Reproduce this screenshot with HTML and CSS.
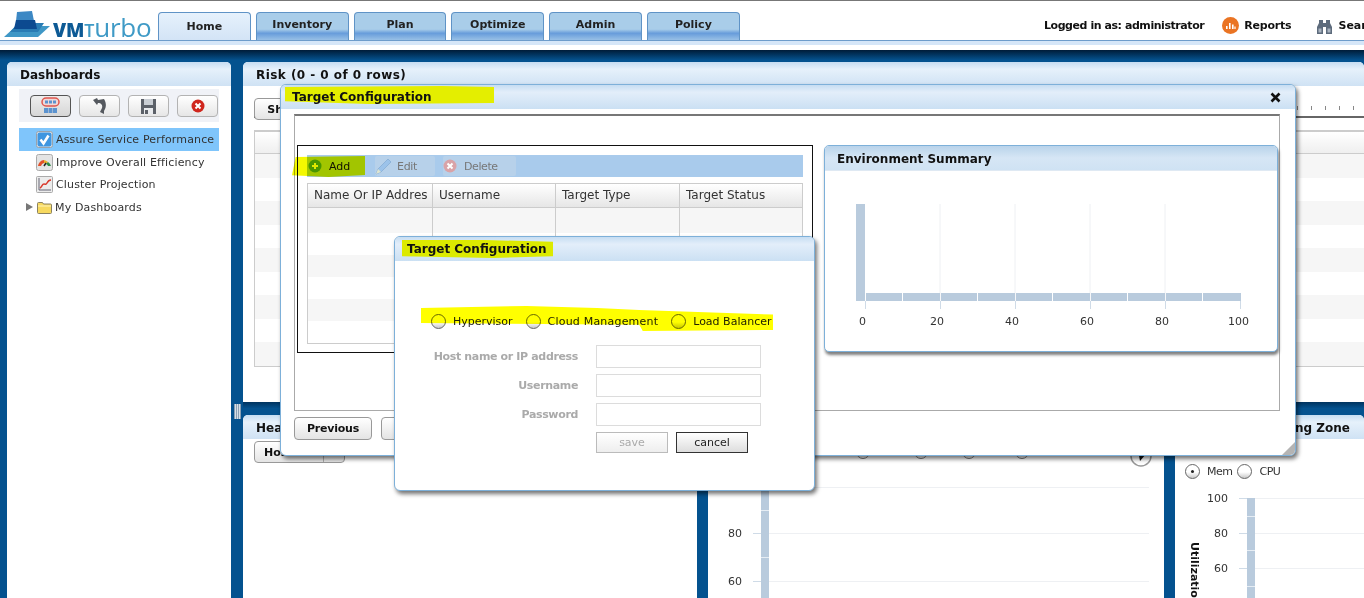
FILE: index.html
```html
<!DOCTYPE html>
<html lang="en">
<head>
<meta charset="utf-8">
<title>VMTurbo - Target Configuration</title>
<link rel="stylesheet" href="styles.css">
</head>
<body>
<div class="app">
  <header class="topbar">
    <div class="logo">
      <svg class="logo-mark" width="50" height="30" viewBox="0 0 50 30">
        <polygon points="2,27 14,16 48,16 36,27" fill="#3f97c6"/>
        <polygon points="8,22 16,13 42,13 36,22" fill="#2a7cb4"/>
        <polygon points="15,2 30,1 32,11 14,11" fill="#3c88c4"/>
        <polygon points="14,10 33,10 35,19 12,19" fill="#0c4a90"/>
      </svg>
      <span class="logo-text"><span class="logo-vm">VM</span><span class="logo-t">T</span>urbo</span>
    </div>
    <nav class="tabs">
      <div class="tab tab-active">Home</div>
      <div class="tab">Inventory</div>
      <div class="tab">Plan</div>
      <div class="tab">Optimize</div>
      <div class="tab">Admin</div>
      <div class="tab">Policy</div>
    </nav>
    <div class="userbar">
      <span class="user">Logged in as: administrator</span>
      <span class="userlink reports">
        <svg width="17" height="17" viewBox="0 0 17 17"><circle cx="8.5" cy="8.5" r="8.5" fill="#ea7423"/><path d="M4 12V9h1.6v3zM7 12V6h1.6v6zM10 12V7.5h1.6V12zM12.4 12V9.5H13.6V12z" fill="#fff"/></svg>
        Reports
      </span>
      <span class="userlink search">
        <svg width="15" height="16" viewBox="0 0 15 16"><path d="M2 2h4v3h3V2h4v3l2 4v7H9V9H6v7H0V9l2-4z" fill="#5d6b7c"/><path d="M1.500 10.500h3v4h-3zM10.500 10.500h3v4h-3z" fill="#aab4c0"/></svg>
        Search
      </span>
    </div>
  </header>
  <div class="band"></div>
  <div class="darkbar"></div>
  <main class="workspace">
    <aside class="panel side">
      <h2 class="panel-title">Dashboards</h2>
      <div class="side-tools">
        <button class="tool tool-on">
          <svg width="19" height="18" viewBox="0 0 19 18"><rect x="1" y="1" width="17" height="8" rx="4" fill="#f0d8d8" stroke="#e0564e" stroke-width="1.500"/><path d="M4 3.500h3v3H4zM8 3.500h3v3H8zM12 3.500h3v3h-3zM3 11h4v5H3zM7.500 11h4v5h-4zM12 11h4v5h-4z" fill="#5c93cf"/></svg>
        </button>
        <button class="tool">
          <svg width="16" height="18" viewBox="0 0 16 18"><path d="M1 3L5 1L6 3L12 2C15 7 14 11 12 14L12 17L8 15L10 11C11 8 9 6 6 6L5 8z" fill="#55595f"/></svg>
        </button>
        <button class="tool">
          <svg width="17" height="17" viewBox="0 0 17 17"><path d="M1 1h15v15H1z" fill="#5c6169"/><path d="M4 1h9v6H4z" fill="#c9ced4"/><path d="M4 10h9v6H4z" fill="#e9ebee"/><path d="M5 12h3v4H5z" fill="#5c6169"/></svg>
        </button>
        <button class="tool">
          <svg width="14" height="14" viewBox="0 0 14 14"><circle cx="7" cy="7" r="6.500" fill="#d0261d"/><path d="M4.500 4.500l5 5M9.500 4.500l-5 5" stroke="#fff" stroke-width="2"/></svg>
        </button>
      </div>
      <ul class="tree">
        <li class="tree-row tree-selected">
          <svg class="tree-icon" width="17" height="17" viewBox="0 0 17 17"><rect x=".5" y=".5" width="16" height="16" rx="2" fill="#dfe3e8" stroke="#9aa2ab"/><rect x="1.500" y="1.500" width="14" height="14" rx="2" fill="#3f96e0"/><path d="M4.500 8.500l3 4 5-8" fill="none" stroke="#fff" stroke-width="2.600"/></svg>
          Assure Service Performance
        </li>
        <li class="tree-row">
          <svg class="tree-icon" width="17" height="17" viewBox="0 0 17 17"><rect x=".5" y=".5" width="16" height="16" rx="2" fill="#e4e4e4" stroke="#aaa"/><path d="M2 12a6.500 6.500 0 0 1 6-6v3a4 4 0 0 0-3 3z" fill="#e2512b"/><path d="M8 6a6.500 6.500 0 0 1 4 2l-2 2a3 3 0 0 0-2-1z" fill="#eeb02e"/><path d="M12 8a6.500 6.500 0 0 1 3 4h-3a4 4 0 0 0-2-2z" fill="#2c8f45"/><path d="M8 12l2-3" stroke="#222" stroke-width="1.500"/></svg>
          Improve Overall Efficiency
        </li>
        <li class="tree-row">
          <svg class="tree-icon" width="17" height="17" viewBox="0 0 17 17"><rect x=".5" y=".5" width="16" height="16" rx="1" fill="#ececec" stroke="#aaa"/><path d="M3 2v12h12" fill="none" stroke="#667" stroke-width="1"/><path d="M4 12c2-1 2-4 4-4s2 1 3-1 2-3 4-3" fill="none" stroke="#d9392c" stroke-width="1.500"/></svg>
          Cluster Projection
        </li>
        <li class="tree-row tree-folder">
          <span class="tree-arrow"></span>
          <svg class="folder-icon" width="15" height="13" viewBox="0 0 15 13"><path d="M.5 2.500a1 1 0 0 1 1-1h4l1 1.500h7a1 1 0 0 1 1 1v7.500a1 1 0 0 1-1 1h-12a1 1 0 0 1-1-1z" fill="#f7d95f" stroke="#8a8262"/><path d="M1 5h13" stroke="#fff3b8"/></svg>
          My Dashboards
        </li>
      </ul>
    </aside>

    <div class="content">
      <section class="panel risk">
        <h2 class="panel-title title-risk">Risk (0 - 0 of 0 rows)</h2>
        <div class="risk-tools">
          <button class="soft-btn show-btn">Show</button>
          <div class="ruler"><i></i><i></i><i></i><i></i><i></i></div>
        </div>
        <div class="risk-table">
          <div class="risk-head"></div>
          <div class="risk-row"></div><div class="risk-row"></div><div class="risk-row"></div>
          <div class="risk-row"></div><div class="risk-row"></div><div class="risk-row"></div>
          <div class="risk-row"></div><div class="risk-row"></div><div class="risk-row"></div>
        </div>
      </section>
      <div class="splitter"><span class="grip"></span></div>
      <div class="lower">
        <section class="panel heat">
          <h2 class="panel-title">Health</h2>
          <button class="soft-btn host-btn">Host<span class="host-div"></span></button>
        </section>
        <section class="panel middle">
          <h2 class="panel-title">Usage</h2>
          <svg class="chart-mid" width="456" height="159" viewBox="709 439 456 159">
            <g fill="none" stroke="#777" stroke-width="1"><circle cx="864" cy="452" r="6.500"/><circle cx="922" cy="452" r="6.500"/><circle cx="970" cy="452" r="6.500"/><circle cx="1023" cy="452" r="6.500"/></g>
            <circle cx="1142" cy="456" r="10" fill="#fff" stroke="#999" stroke-width="1.500"/>
            <path d="M1139 450l8 4-6 7z" fill="#111"/>
            <g stroke="#eef0f3"><path d="M770 487.500H1150M770 533.500H1150M770 581.500H1150"/></g>
            <rect x="762" y="440" width="8" height="158" fill="#b9cbdd"/>
            <path d="M762 510.500h8M762 557.500h8" stroke="#e6edf4"/>
            <path d="M754 533.500h8M754 581.500h8" stroke="#cfdbe7"/>
            <text class="axis" x="729" y="537">80</text>
            <text class="axis" x="729" y="585">60</text>
          </svg>
        </section>
        <section class="panel right">
          <h2 class="panel-title title-end">Operating Zone</h2>
          <div class="mem-row">
            <span class="radio radio-on"></span><span class="mem-label">Mem</span>
            <span class="radio"></span><span class="mem-label">CPU</span>
          </div>
          <svg class="chart-right" width="189" height="118" viewBox="1175 480 189 118">
            <g stroke="#eef0f3"><path d="M1255 498.500H1364M1255 533.500H1364M1255 568.500H1364"/></g>
            <rect x="1247" y="498" width="8" height="100" fill="#b9cbdd"/>
            <path d="M1247 516.500h8M1247 550.500h8M1247 586.500h8" stroke="#e6edf4"/>
            <path d="M1239 498.500h8M1239 533.500h8M1239 568.500h8" stroke="#cfdbe7"/>
            <text class="axis" x="1207" y="502">100</text>
            <text class="axis" x="1214" y="537">80</text>
            <text class="axis" x="1214" y="572">60</text>
            <text class="axis-title" transform="translate(1191 542) rotate(90)">Utilization</text>
          </svg>
        </section>
      </div>
    </div>
  </main>
</div>

<div class="dialog dialog-main">
  <div class="dialog-title">
    <i class="mark mark-main"></i>
    <span class="dialog-text">Target Configuration</span>
    <svg width="11" height="11" viewBox="0 0 11 11"><path d="M1.500 1.500l8 8M9.500 1.500l-8 8" stroke="#111" stroke-width="2.600"/></svg>
  </div>
  <div class="dialog-body">
    <div class="inner">
      <div class="targets">
        <div class="toolbar">
          <span class="tb-btn tb-add">
            <svg width="14" height="14" viewBox="0 0 14 14"><circle cx="7" cy="7" r="6.500" fill="#4d9a1e"/><path d="M7 4v6M4 7h6" stroke="#e9ee70" stroke-width="2"/></svg>
            Add
          </span>
          <span class="tb-btn tb-edit">
            <svg width="18" height="18" viewBox="0 0 18 18"><path d="M1 17l2-5L13 2l3 3L6 15z" fill="#9cc3ea" stroke="#8eb4da"/><path d="M1 17l2-5 3 3z" fill="#dfe5d0"/></svg>
            Edit
          </span>
          <span class="tb-btn tb-delete">
            <svg width="14" height="14" viewBox="0 0 14 14"><circle cx="7" cy="7" r="6.500" fill="#d9a3a8"/><path d="M4.500 4.500l5 5M9.500 4.500l-5 5" stroke="#fff" stroke-width="2"/></svg>
            Delete
          </span>
        </div>
        <div class="grid">
          <div class="grid-row grid-head">
            <div class="cell">Name Or IP Addres</div>
            <div class="cell">Username</div>
            <div class="cell">Target Type</div>
            <div class="cell">Target Status</div>
          </div>
          <div class="grid-row grid-first"><div class="cell"></div><div class="cell"></div><div class="cell"></div><div class="cell"></div></div>
          <div class="grid-row"><div class="cell"></div><div class="cell"></div><div class="cell"></div><div class="cell"></div></div>
          <div class="grid-row"><div class="cell"></div><div class="cell"></div><div class="cell"></div><div class="cell"></div></div>
          <div class="grid-row"><div class="cell"></div><div class="cell"></div><div class="cell"></div><div class="cell"></div></div>
          <div class="grid-row"><div class="cell"></div><div class="cell"></div><div class="cell"></div><div class="cell"></div></div>
          <div class="grid-row"><div class="cell"></div><div class="cell"></div><div class="cell"></div><div class="cell"></div></div>
        </div>
      </div>
      <section class="env">
        <h3 class="env-title">Environment Summary</h3>
        <svg class="env-chart" width="452" height="180" viewBox="825 171 452 180">
          <g stroke="#eef0f3"><path d="M940 204V301M1015 204V301M1090 204V301M1165 204V301"/></g>
          <rect x="856" y="204" width="9" height="97" fill="#b9cbdd"/>
          <g fill="#b9cbdd">
            <rect x="866" y="293" width="36" height="8"/><rect x="903" y="293" width="37" height="8"/>
            <rect x="941" y="293" width="36" height="8"/><rect x="978" y="293" width="37" height="8"/>
            <rect x="1016" y="293" width="36" height="8"/><rect x="1053" y="293" width="37" height="8"/>
            <rect x="1091" y="293" width="36" height="8"/><rect x="1128" y="293" width="37" height="8"/>
            <rect x="1166" y="293" width="36" height="8"/><rect x="1203" y="293" width="38" height="8"/>
          </g>
          <g stroke="#cfdbe7"><path d="M865.500 301V309M940.500 301V309M1015.500 301V309M1090.500 301V309M1165.500 301V309M1240.500 301V309"/></g>
          <g class="axis">
            <text x="859" y="325">0</text><text x="930" y="325">20</text><text x="1005" y="325">40</text>
            <text x="1080" y="325">60</text><text x="1155" y="325">80</text><text x="1228" y="325">100</text>
          </g>
        </svg>
      </section>
    </div>
    <div class="wizard">
      <button class="soft-btn wiz-btn">Previous</button>
      <button class="soft-btn wiz-btn">Next</button>
    </div>
  </div>
  <span class="resize"></span>
</div>

<div class="dialog dialog-sub">
  <div class="dialog-title title-sub">
    <i class="mark mark-sub"></i>
    <span class="dialog-text">Target Configuration</span>
  </div>
  <div class="sub-body">
    <div class="radios">
      <span class="radio"></span><span class="radio-label label-a">Hypervisor</span>
      <span class="radio"></span><span class="radio-label label-b">Cloud Management</span>
      <span class="radio"></span><span class="radio-label">Load Balancer</span>
    </div>
    <div class="form">
      <label class="form-label">Host name or IP address</label><span class="input"></span>
      <label class="form-label">Username</label><span class="input"></span>
      <label class="form-label">Password</label><span class="input"></span>
    </div>
    <div class="form-actions">
      <button class="action action-off">save</button>
      <button class="action">cancel</button>
    </div>
  </div>
</div>

<div class="hl hl-add"></div>
<div class="hl hl-radios"></div>
</body>
</html>
```

FILE: styles.css
```css
* { box-sizing: border-box; }
html, body { margin: 0; height: 598px; overflow: hidden; background: #fff; }
body { position: relative; width: 1364px; font-family: "DejaVu Sans", Verdana, sans-serif; font-size: 11px; color: #111; }
h2, h3, ul { margin: 0; padding: 0; }
button { font-family: inherit; cursor: default; }

.app { display: flex; flex-direction: column; height: 598px; }

/* top bar */
.topbar { height: 41px; flex: none; display: flex; border-top: 1px solid #777; border-bottom: 1px solid #6d9ccb; background: #fff; }
.logo { width: 158px; flex: none; display: flex; align-items: flex-start; position: relative; padding: 9px 0 0 2px; }
.logo-mark { flex: none; }
.logo-text { font-family: "Open Sans", sans-serif; font-size: 26px; line-height: 30px; color: #3f9ac6; margin: 2px 0 0 1px; letter-spacing: -.2px; white-space: nowrap; }
.logo-vm { font-size: 19px; font-weight: 800; color: #0d5a95; }
.logo-t { font-size: 18px; font-weight: 600; }
.tabs { display: flex; gap: 5px; align-items: flex-end; height: 39px; flex: none; padding-top: 11px; }
.tab { width: 92.800px; height: 28px; border: 1px solid #5f93c6; border-bottom: 0; border-radius: 4px 4px 0 0; background: linear-gradient(#a9cde9 0, #a9cde9 60%, #679cdb 75%, #98c0e6 100%); font-weight: 700; font-size: 11px; text-align: center; line-height: 24px; color: #222; }
.tab-active { background: linear-gradient(#e6f1fc, #d3e4f6); line-height: 27px; }
.userbar { margin-left: auto; display: flex; align-items: center; height: 39px; padding-top: 10px; width: 320px; flex: none; white-space: nowrap; font-weight: 700; overflow: hidden; }
.user { letter-spacing: -.44px; }
.userlink { display: inline-flex; align-items: center; gap: 5px; }
.reports { margin-left: 18px; letter-spacing: -.2px; }
.search { margin-left: 26px; gap: 6px; }

.band { height: 4px; flex: none; background: #d5e6f8; }
.band + .darkbar { margin-top: 5px; }
.darkbar { height: 12px; flex: none; background: linear-gradient(#001c38, #04528f 85%); }

/* workspace */
.workspace { flex: 1; min-height: 0; display: flex; gap: 12px; padding-left: 7px; background: #04528f; overflow: hidden; }
.panel { background: #fff; border-radius: 5px 5px 0 0; overflow: hidden; }
.panel-title { height: 24px; font-size: 12px; font-weight: 700; line-height: 26px; padding-left: 13px; color: #111; background: linear-gradient(#c6ddf2 0, #e6f1fb 30%, #cfe2f4 100%); }
.title-risk { letter-spacing: .45px; }
.title-end { padding: 0 14px 0 0; text-align: right; }
.side { width: 224px; flex: none; }
.side-tools { margin: 3px 12px 0; height: 33px; display: flex; gap: 8px; padding: 6px 0 0 11px; background: #f0f2f7; }
.tool { width: 41px; height: 22px; padding: 0; border: 1px solid #b3b3b3; border-radius: 4px; background: linear-gradient(#fff, #e6e6e6); display: flex; align-items: center; justify-content: center; }
.tool-on { border-color: #555; background: linear-gradient(#eee, #d6d6d6); }
.tree { list-style: none; margin: 6px 12px 0; }
.tree-row { height: 22.600px; display: flex; align-items: center; gap: 3px; padding-left: 17px; font-size: 11px; letter-spacing: .15px; color: #333; white-space: nowrap; }
.tree-icon { flex: none; }
.tree-selected { background: #7fc5fb; height: 23px; }
.tree-folder { padding-left: 7px; gap: 0; }
.tree-arrow { width: 0; height: 0; border-left: 7px solid #777; border-top: 4px solid transparent; border-bottom: 4px solid transparent; margin-right: 4px; }
.folder-icon { margin-right: 3px; flex: none; }

.content { flex: 1; min-width: 0; display: flex; flex-direction: column; }
.risk { height: 340px; flex: none; }
.risk-tools { height: 32px; margin: 0 0 12px 11px; position: relative; padding-top: 12px; border-bottom: 2px solid #666; }
.soft-btn { height: 22px; border: 1px solid #999; border-radius: 4px; background: linear-gradient(#fff, #e4e4e4); font-weight: 700; font-size: 11px; color: #111; padding: 0; }
.show-btn { width: 60px; position: relative; }
.ruler { position: absolute; right: 10px; top: 20px; display: flex; gap: 13px; }
.ruler i { width: 1px; height: 4px; background: #888; }
.risk-table { margin: 0 0 0 11px; border-bottom: 1px solid #ccc; border-left: 1px solid #ccc; }
.risk-head { height: 24px; border-top: 2px solid #ccc; border-bottom: 1px solid #ccc; background: linear-gradient(#fff, #efefef); }
.risk-row { height: 23.500px; }
.risk-row:nth-child(even) { background: #f6f6f6; }

.splitter { height: 13px; flex: none; background: linear-gradient(#00335f, #04528f 50%); position: relative; }
.grip { position: absolute; left: -9px; top: 2px; width: 7px; height: 15px; background: repeating-linear-gradient(90deg, #8aa0b4 0 1px, #d7dfe7 1px 2px); }
.lower { flex: 1; min-height: 0; display: flex; gap: 11px; }
.heat { width: 454px; flex: none; }
.host-btn { width: 91px; margin: 2px 0 0 11px; display: block; text-align: left; padding-left: 9px; position: relative; }
.host-div { position: absolute; right: 20px; top: 0; bottom: 0; width: 1px; background: #aaa; }
.middle { width: 456px; flex: none; }
.right { flex: 1; min-width: 0; }
.chart-mid, .chart-right, .env-chart { display: block; }
.axis, .axis text { font: 11px "DejaVu Sans", sans-serif; fill: #333; }
.axis-title { font: 700 11px "DejaVu Sans", sans-serif; fill: #111; }
.mem-row { display: flex; align-items: center; height: 18px; margin: 23px 0 0 10px; color: #333; }
.mem-label { margin: 0 5px 0 7px; letter-spacing: -.5px; }
.chart-right { margin-top: 0; }

/* dialogs */
.dialog { position: absolute; background: #fff; border: 1px solid #7db0d9; border-radius: 6px; box-shadow: 2px 3px 4px rgba(0, 0, 0, .55); overflow: hidden; }
.dialog-main { left: 280px; top: 84px; width: 1016px; height: 372px; }
.dialog-sub { left: 394px; top: 236px; width: 421px; height: 255px; }
.dialog-title { position: relative; height: 24px; display: flex; align-items: center; justify-content: space-between; padding: 0 14px 0 11px; font-size: 12px; font-weight: 700; color: #111; background: linear-gradient(#c6ddf2 0, #e3eefa 30%, #cbe0f3 100%); }
.title-sub { padding-left: 12px; }
.dialog-text { position: relative; }
.mark { position: absolute; background: #e4ee00; }
.mark-main { left: 4px; top: 1px; width: 209px; height: 18px; clip-path: polygon(0 5%, 75% 0, 100% 5%, 100% 95%, 40% 100%, 0 85%); }
.mark-sub { left: 7px; top: 3px; width: 151px; height: 18px; background: #dcea00; clip-path: polygon(0 0, 55% 0, 100% 10%, 100% 90%, 60% 100%, 0 90%); }
.dialog-body { padding: 5px 15px 0 13px; }
.inner { width: 986px; height: 297px; border: 1px solid #aaa; border-top: 2px solid #777; display: flex; align-items: flex-start; padding: 29px 0 0 2px; }
.targets { width: 516px; height: 208px; flex: none; border: 1px solid #111; padding: 9px; }
.toolbar { height: 22px; background: #a9cbec; display: flex; align-items: center; }
.tb-btn { height: 20px; display: flex; align-items: center; font-size: 11px; color: #777; border-radius: 2px; }
.tb-add { color: #111; width: 68px; padding-left: 1px; gap: 7px; }
.tb-edit { width: 60px; margin-right: 8px; background: #b7d1ea; gap: 4px; letter-spacing: -.3px; }
.tb-delete { width: 73px; background: #b7d1ea; gap: 7px; letter-spacing: -.4px; }
.grid { margin-top: 6px; border: 1px solid #ccc; height: 161px; overflow: hidden; }
.grid-row { display: grid; grid-template-columns: 125px 123px 124px 1fr; height: 22px; }
.grid-row:nth-child(even) { background: #f6f6f6; }
.grid-first { height: 25px; }
.grid-head { height: 24px; background: linear-gradient(#fff, #e6e6e6); border-bottom: 1px solid #ccc; }
.cell { border-right: 1px solid #ccc; padding-left: 6px; font-size: 12px; line-height: 23px; color: #333; overflow: hidden; white-space: nowrap; }
.cell:last-child { border-right: 0; }
.env { width: 454px; flex: none; height: 207px; margin-left: 11px; background: #fff; border: 1px solid #7db0d9; border-radius: 5px; box-shadow: 1px 3px 3px rgba(0, 0, 0, .5); overflow: hidden; }
.env-title { height: 25px; font-size: 12px; font-weight: 700; line-height: 27px; padding-left: 12px; background: linear-gradient(#b9d3ea 0, #d6e6f5 50%, #cfe2f3 100%); border-bottom: 1px solid #dfe9f3; }
.wizard { display: flex; gap: 9px; margin-top: 6px; }
.wiz-btn { width: 78px; height: 23px; letter-spacing: -.2px; }
.resize { position: absolute; right: 0; bottom: 0; width: 13px; height: 13px; background: #b4b4b4; clip-path: polygon(100% 0, 100% 100%, 0 100%); }

.sub-body { padding-top: 53px; }
.radios { display: flex; align-items: center; height: 14px; padding-left: 36px; color: #222; }
.radio { width: 15px; height: 15px; flex: none; border: 1px solid #666; border-radius: 50%; background: linear-gradient(#fff 55%, #c8c8c8); position: relative; }
.radio-on::after { content: ""; position: absolute; left: 5px; top: 5px; width: 3px; height: 3px; border-radius: 50%; background: #222; }
.radio-label { margin-left: 7px; white-space: nowrap; }
.label-a { margin-right: 13px; }
.label-b { margin-right: 13px; letter-spacing: .2px; }
.form { display: grid; grid-template-columns: 183px 165px; column-gap: 18px; row-gap: 6px; grid-auto-rows: 23px; margin-top: 17px; }
.form-label { font-weight: 700; font-size: 11px; letter-spacing: -.35px; color: #aaa; text-align: right; line-height: 24px; white-space: nowrap; }
.input { border: 1px solid #dcdcdc; background: #fff; }
.form-actions { display: flex; gap: 8px; margin: 6px 0 0 201px; }
.action { width: 72px; height: 21px; padding: 0; border: 1px solid #333; background: linear-gradient(#fff, #ddd); font-size: 11px; color: #222; }
.action-off { border-color: #bbb; color: #aaa; background: linear-gradient(#fff, #eee); }

/* marker highlights painted over the screenshot */
.hl { position: absolute; background: #f4f800; mix-blend-mode: multiply; }
.hl-add { left: 292px; top: 156px; width: 73px; height: 21px; clip-path: polygon(5% 5%, 100% 0, 100% 90%, 50% 100%, 0 92%); }
.hl-radios { left: 421px; top: 306px; width: 352px; height: 26px; background: #ffff00; clip-path: polygon(0 8%, 30% 0, 50% 8%, 62% 15%, 100% 33%, 100% 92%, 63% 96%, 62% 72%, 0 65%); }
```
